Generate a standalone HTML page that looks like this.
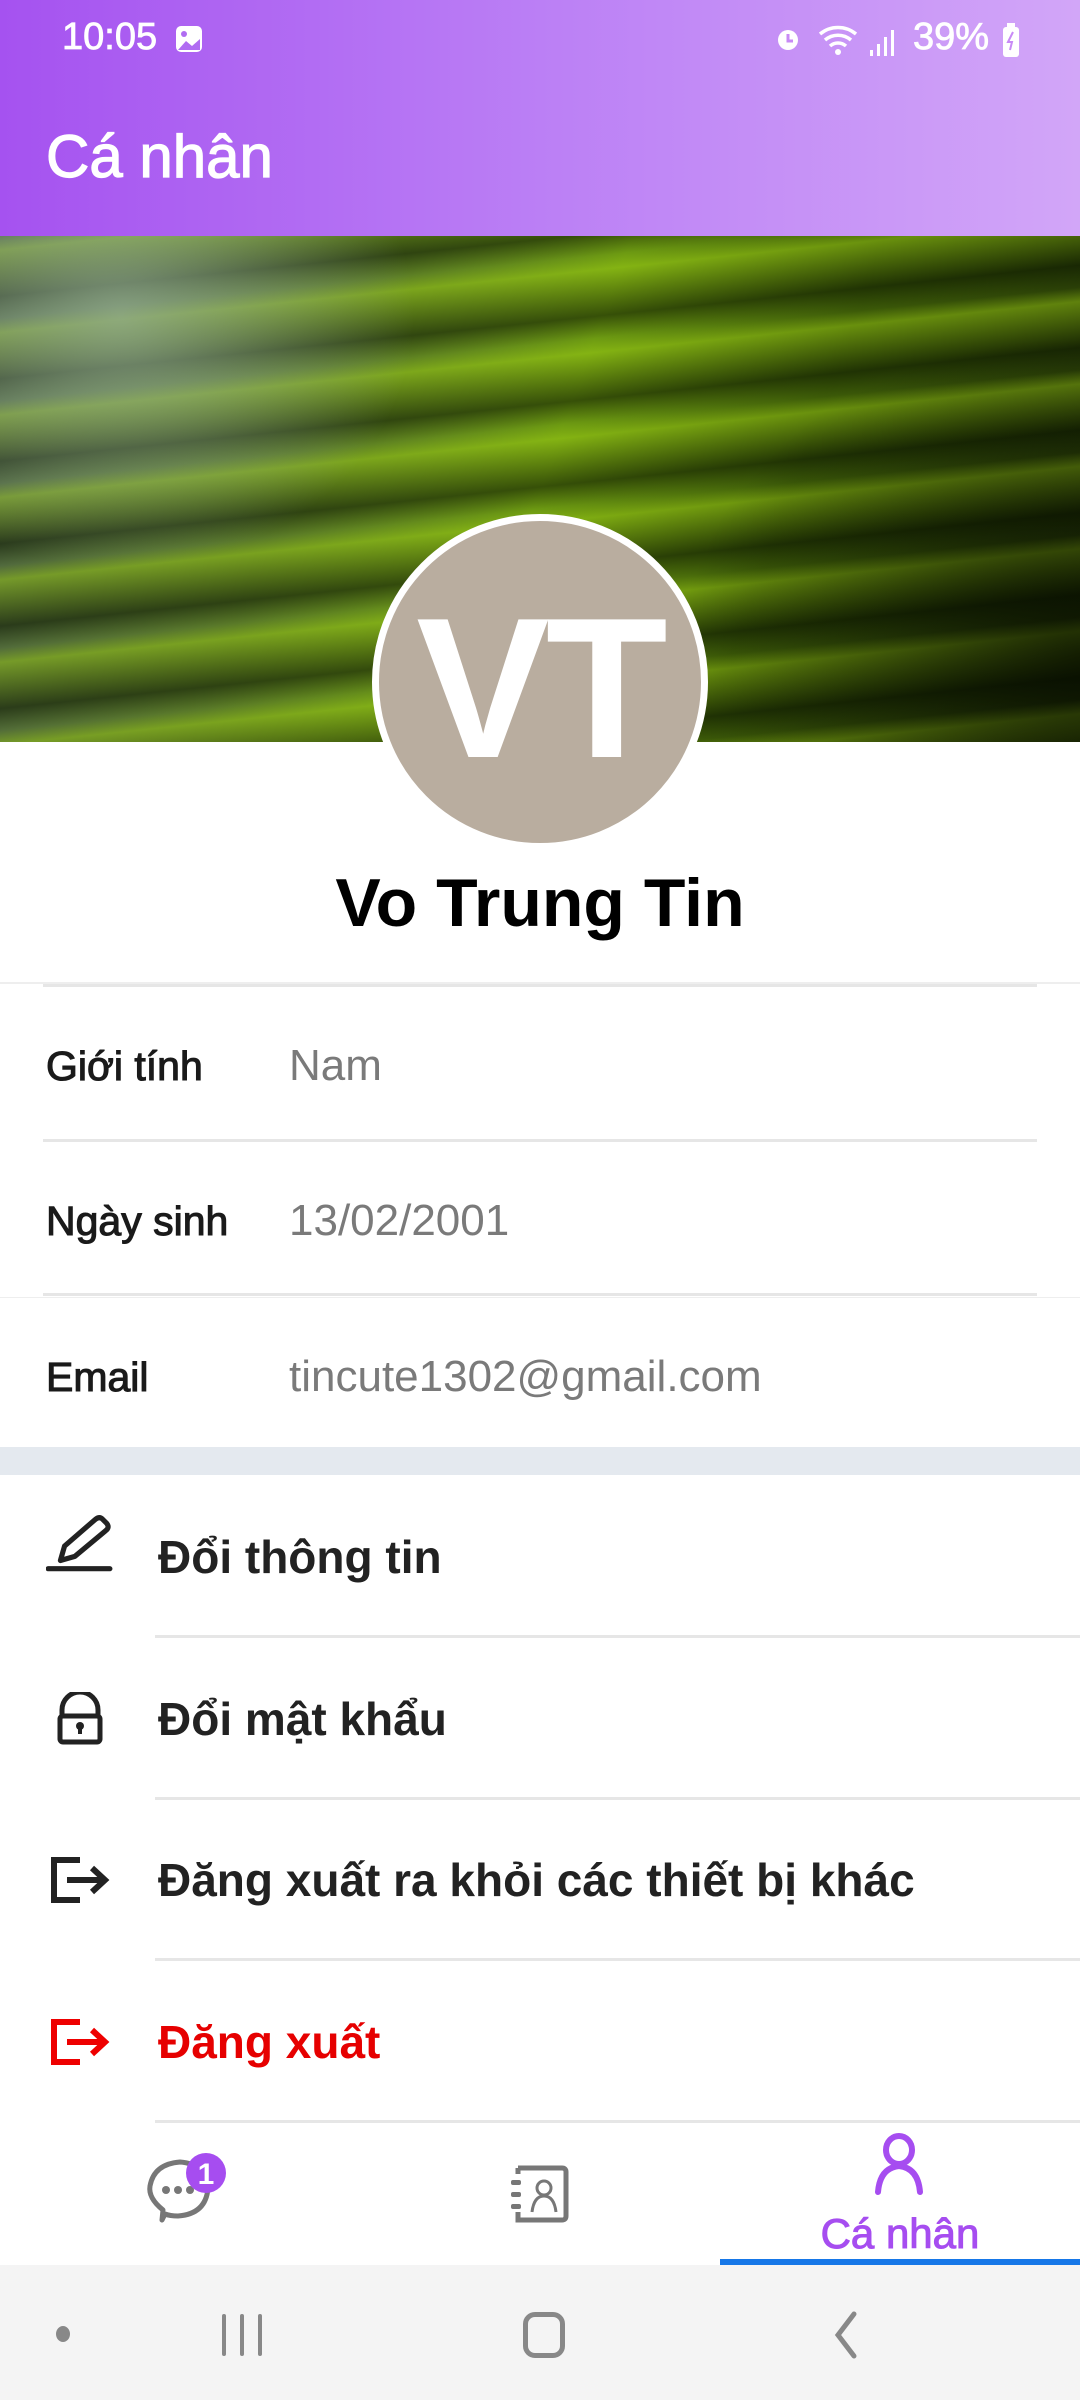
<!DOCTYPE html>
<html><head><meta charset="utf-8">
<style>
*{margin:0;padding:0;box-sizing:border-box}
body{width:1080px;height:2400px;overflow:hidden;background:#fff;font-family:"Liberation Sans",sans-serif;position:relative;color:#1a1a1a}
.abs{position:absolute}
.hdr{left:0;top:0;width:1080px;height:236px;background:linear-gradient(90deg,#a552f0 0%,#bb7ff5 50%,#d2a6f8 100%)}
.st{color:#fff;font-size:38px;top:16px;-webkit-text-stroke:0.8px #fff}
.title{left:46px;top:122px;color:#fff;font-size:60px;-webkit-text-stroke:1.2px #fff}
.banner{left:0;top:236px;width:1080px;height:506px;overflow:hidden;
background:
radial-gradient(ellipse 420px 360px at 120px 80px,rgba(150,175,150,.75),rgba(120,140,110,0) 70%),
radial-gradient(ellipse 500px 400px at 1080px 420px,rgba(5,10,0,.7),rgba(0,0,0,0) 80%),
repeating-linear-gradient(174deg,rgba(150,200,20,.0) 0px,rgba(160,210,20,.45) 14px,rgba(10,20,0,.55) 60px,rgba(0,0,0,0) 82px),
linear-gradient(110deg,#4d6247 0%,#5a7a28 30%,#6d9a12 50%,#3c5a08 70%,#1c2a06 100%)}
.avatar{left:372px;top:514px;width:336px;height:336px;border-radius:50%;background:#b9ad9f;border:7px solid #fff;color:#fff;font-size:200px;font-weight:bold;text-align:center;line-height:336px;letter-spacing:-4px}
.name{left:0;width:1080px;text-align:center;top:864px;font-size:68px;font-weight:bold;color:#000}
.hl{height:3px;background:#e6e6e6}
.lab{left:46px;font-size:41px;-webkit-text-stroke:1.1px #1a1a1a}
.val{left:289px;font-size:44px;color:#7a7a7a}
.mi{left:158px;font-size:46px;font-weight:bold;color:#222}
</style></head><body>
<div class="abs hdr"></div>
<div class="abs st" style="left:62px">10:05</div>
<svg class="abs" style="left:174px;top:24px" width="30" height="30" viewBox="0 0 30 30"><rect x="2" y="2" width="26" height="26" rx="5" fill="#fff"/><circle cx="10" cy="10" r="3" fill="#b06cf2"/><path d="M4 26 L12 17 L18 22 L26 15 L26 26Z" fill="#b06cf2"/></svg>
<svg class="abs" style="left:772px;top:20px" width="250" height="40" viewBox="0 0 250 40">
<circle cx="16" cy="20" r="10" fill="#fff"/><path d="M16 14v7h5" stroke="#c88af6" stroke-width="3" fill="none"/>
<path d="M48 14a28 28 0 0 1 36 0M53 20a20 20 0 0 1 26 0M58 26a12 12 0 0 1 16 0" stroke="#fff" stroke-width="3.5" fill="none"/><circle cx="66" cy="32" r="3" fill="#fff"/>
<rect x="98" y="30" width="3" height="6" fill="#fff"/><rect x="105" y="24" width="3" height="12" fill="#fff"/><rect x="112" y="17" width="3" height="19" fill="#fff"/><rect x="119" y="10" width="3" height="26" fill="#fff"/>
</svg>
<div class="abs st" style="left:913px">39%</div>
<svg class="abs" style="left:1000px;top:22px" width="22" height="36" viewBox="0 0 22 36"><rect x="3" y="5" width="16" height="30" rx="3" fill="#fff"/><rect x="7" y="1" width="8" height="4" fill="#fff"/><path d="M13 10 L8 20 H12 L10 28" stroke="#c88af6" stroke-width="2" fill="none"/></svg>
<div class="abs title">Cá nhân</div>

<div class="abs banner"></div>
<div class="abs avatar">VT</div>
<div class="abs name">Vo Trung Tin</div>

<div class="abs hl" style="left:0;top:982px;width:1080px;height:2px;background:#eee"></div>
<div class="abs hl" style="left:43px;top:984px;width:994px"></div>
<div class="abs lab" style="top:1043px">Giới tính</div><div class="abs val" style="top:1041px">Nam</div>
<div class="abs hl" style="left:43px;top:1139px;width:994px"></div>
<div class="abs lab" style="top:1198px">Ngày sinh</div><div class="abs val" style="top:1196px">13/02/2001</div>
<div class="abs hl" style="left:43px;top:1293px;width:994px"></div>
<div class="abs" style="left:0;top:1297px;width:1080px;height:1px;background:#eee"></div>
<div class="abs lab" style="top:1354px">Email</div><div class="abs val" style="top:1352px">tincute1302@gmail.com</div>
<div class="abs" style="left:0;top:1447px;width:1080px;height:28px;background:#e4e9ef"></div>

<svg class="abs" style="left:46px;top:1514px" width="68" height="60" viewBox="0 0 66 56"><path d="M14 44 L18 30 L48 4 Q52 1 55 4 L59 8 Q62 12 58 15 L28 40 Z" stroke="#222" stroke-width="5" fill="none" stroke-linejoin="round"/><path d="M2 52 H62" stroke="#222" stroke-width="5" stroke-linecap="round"/></svg>
<div class="abs mi" style="top:1530px">Đổi thông tin</div>
<div class="abs hl" style="left:155px;top:1635px;width:925px"></div>
<svg class="abs" style="left:56px;top:1692px" width="48" height="54" viewBox="0 0 48 54"><path d="M6 24 V18 A18 18 0 0 1 42 18 V24" stroke="#222" stroke-width="5" fill="none"/><rect x="4" y="24" width="40" height="26" rx="3" stroke="#222" stroke-width="5" fill="none"/><circle cx="24" cy="34" r="4" fill="#222"/><rect x="22" y="34" width="4" height="8" fill="#222"/></svg>
<div class="abs mi" style="top:1692px">Đổi mật khẩu</div>
<div class="abs hl" style="left:155px;top:1797px;width:925px"></div>
<svg class="abs" style="left:50px;top:1856px" width="62" height="48" viewBox="0 0 62 48"><path d="M30 4 H4 V44 H30" stroke="#222" stroke-width="6" fill="none"/><path d="M17 24 H54 M42 12 L55 24 L42 36" stroke="#222" stroke-width="6" fill="none"/></svg>
<div class="abs mi" style="top:1853px">Đăng xuất ra khỏi các thiết bị khác</div>
<div class="abs hl" style="left:155px;top:1958px;width:925px"></div>
<svg class="abs" style="left:50px;top:2018px" width="62" height="48" viewBox="0 0 62 48"><path d="M30 4 H4 V44 H30" stroke="#e00" stroke-width="6" fill="none"/><path d="M17 24 H54 M42 12 L55 24 L42 36" stroke="#e00" stroke-width="6" fill="none"/></svg>
<div class="abs mi" style="top:2015px;color:#e60000">Đăng xuất</div>
<div class="abs hl" style="left:155px;top:2120px;width:925px"></div>

<svg class="abs" style="left:140px;top:2148px" width="100" height="90" viewBox="140 2148 100 90"><path d="M162 2220 L163 2210 Q148 2198 150 2186 Q154 2164 180 2162 Q206 2164 208 2188 Q206 2214 178 2216 Q170 2216 165 2214 Z" stroke="#777" stroke-width="5" fill="none" stroke-linejoin="round"/><circle cx="166" cy="2190" r="4" fill="#777"/><circle cx="178" cy="2190" r="4" fill="#777"/><circle cx="190" cy="2190" r="4" fill="#777"/><circle cx="206" cy="2173" r="20" fill="#a64df0"/><text x="206" y="2184" font-size="30" fill="#fff" text-anchor="middle" font-family="Liberation Sans" font-weight="bold">1</text></svg>
<svg class="abs" style="left:508px;top:2164px" width="62" height="60" viewBox="0 0 62 60"><path d="M10 4 H54 Q58 4 58 8 V52 Q58 56 54 56 H10 V48" stroke="#777" stroke-width="5" fill="none"/><path d="M10 4 V10" stroke="#777" stroke-width="5"/><rect x="3" y="16" width="10" height="5" rx="2" fill="#777"/><rect x="3" y="28" width="10" height="5" rx="2" fill="#777"/><rect x="3" y="40" width="10" height="5" rx="2" fill="#777"/><circle cx="36" cy="24" r="7" stroke="#777" stroke-width="3" fill="none"/><path d="M24 48 Q26 32 36 32 Q46 32 48 48" stroke="#777" stroke-width="3" fill="none"/></svg>
<svg class="abs" style="left:872px;top:2132px" width="54" height="64" viewBox="0 0 54 64"><ellipse cx="27" cy="18" rx="13" ry="14" stroke="#a64df0" stroke-width="6" fill="none"/><path d="M6 60 Q8 36 27 34 Q46 36 48 60" stroke="#a64df0" stroke-width="6" fill="none" stroke-linecap="round"/></svg>
<div class="abs" style="left:720px;width:360px;text-align:center;top:2210px;font-size:42px;color:#a64df0;-webkit-text-stroke:1px #a64df0">Cá nhân</div>
<div class="abs" style="left:720px;top:2259px;width:360px;height:6px;background:#1677e8"></div>

<div class="abs" style="left:0;top:2265px;width:1080px;height:135px;background:#f4f4f4"></div>
<div class="abs" style="left:56px;top:2326px;width:14px;height:16px;border-radius:50%;background:#888"></div>
<div class="abs" style="left:222px;top:2314px;width:4px;height:42px;background:#888;border-radius:2px"></div>
<div class="abs" style="left:240px;top:2314px;width:4px;height:42px;background:#888;border-radius:2px"></div>
<div class="abs" style="left:258px;top:2314px;width:4px;height:42px;background:#888;border-radius:2px"></div>
<div class="abs" style="left:523px;top:2312px;width:42px;height:46px;border:5px solid #888;border-radius:12px"></div>
<svg class="abs" style="left:830px;top:2310px" width="30" height="50" viewBox="0 0 30 50"><path d="M24 4 L8 25 L24 46" stroke="#888" stroke-width="5" fill="none" stroke-linecap="round"/></svg>
</body></html>
